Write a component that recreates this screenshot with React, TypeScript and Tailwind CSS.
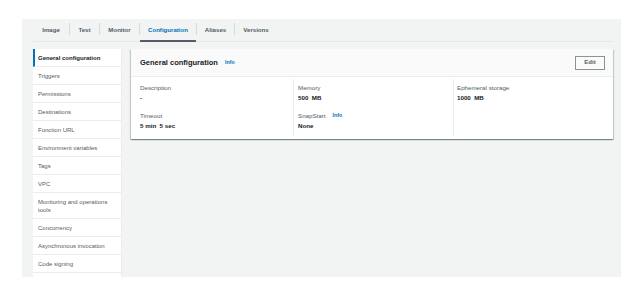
import React from "react";

const tabs = [
  { label: "Image", w: "w-[36px]" },
  { label: "Test", w: "w-[29px]" },
  { label: "Monitor", w: "w-[39px]" },
  { label: "Configuration", w: "w-[56px]", active: true },
  { label: "Aliases", w: "w-[37px]" },
  { label: "Versions", w: "w-[42px]" },
];

const navItems = [
  "General configuration",
  "Triggers",
  "Permissions",
  "Destinations",
  "Function URL",
  "Environment variables",
  "Tags",
  "VPC",
  "Monitoring and operations tools",
  "Concurrency",
  "Asynchronous invocation",
  "Code signing",
];

function Info() {
  return <span className="ml-[7px] text-[5.3px] font-bold text-[#0073bb] leading-none">Info</span>;
}

function Field({ label, value, info, first }: { label: string; value: string; info?: boolean; first?: boolean }) {
  return (
    <div className={first ? "" : "mt-[10px]"}>
      <div className="flex items-center h-[8px] leading-[8px] text-[6.2px] text-[#545b64]">
        {label}
        {info && <Info />}
      </div>
      <div className="mt-[2px] h-[8px] leading-[8px] text-[6.2px] font-bold text-[#16191f] whitespace-pre">{value}</div>
    </div>
  );
}

export default function App() {
  return (
    <div className="w-[640px] h-[295px] bg-white pt-[19px] pl-[22px]" style={{ fontFamily: '"Liberation Sans", Arial, sans-serif' }}>
      <div className="w-[599px] h-[258px] bg-[#f2f3f3] pl-[11px] pr-[8px] overflow-hidden">
        {/* Tabs */}
        <div className="flex h-[23px] border-b border-[#e4e8e8]">
          {tabs.map((t, i) => (
            <React.Fragment key={t.label}>
              {i > 0 && <div className="w-px h-[12px] mt-[4px] bg-[#d5dbdb]" />}
              <div
                className={`relative ${t.w} flex items-center justify-center pb-[1px] text-[6.1px] font-bold ${
                  t.active ? "text-[#0073bb]" : "text-[#545b64]"
                }`}
              >
                {t.label}
                {t.active && <span className="absolute left-0 right-0 bottom-[-1px] h-[2px] bg-[#545b64]" />}
              </div>
            </React.Fragment>
          ))}
        </div>

        <div className="flex mt-[7px] gap-[9px] items-start">
          {/* Sidebar */}
          <div className="w-[89px] shrink-0 bg-white border-r border-[#eaeded]">
            {navItems.map((item, i) => (
              <div
                key={item}
                className={`pt-[5px] pb-[4px] pr-[6px] leading-[8px] text-[6px] border-b border-[#eaeded] ${
                  i === 0
                    ? "pl-[3px] border-l-2 border-l-[#0073bb] font-bold text-[#16191f]"
                    : "pl-[5px] text-[#545b64]"
                }`}
              >
                {item}
              </div>
            ))}
            <div className="h-[18px]" />
          </div>

          {/* Card */}
          <div className="flex-1 bg-white shadow-[0_1px_1px_0_rgba(0,28,36,0.3),1px_1px_1px_0_rgba(0,28,36,0.15),-1px_1px_1px_0_rgba(0,28,36,0.15)]">
            <div className="h-[28px] bg-[#fafafa] border-b border-[#eaeded] flex items-center pl-[9px] pr-[8px]">
              <div className="flex items-center text-[7.5px] font-bold text-[#16191f]">
                General configuration
                <Info />
              </div>
              <div className="ml-auto w-[30px] h-[14px] border border-[#879596] flex items-center justify-center text-[6px] font-bold text-[#545b64]">
                Edit
              </div>
            </div>
            <div className="flex pl-[9px] pt-[2px] pb-[4px]">
              <div className="w-[153px] pt-[5px] h-[56px]">
                <Field first label="Description" value="-" />
                <Field label="Timeout" value={"5 min  5 sec"} />
              </div>
              <div className="w-[160px] pt-[5px] pl-[4px] h-[56px] border-l border-[#eaeded]">
                <Field first label="Memory" value={"500  MB"} />
                <Field label="SnapStart" value="None" info />
              </div>
              <div className="flex-1 pt-[5px] pl-[3px] h-[56px] border-l border-[#eaeded]">
                <Field first label="Ephemeral storage" value={"1000  MB"} />
              </div>
            </div>
          </div>
        </div>
      </div>
    </div>
  );
}
